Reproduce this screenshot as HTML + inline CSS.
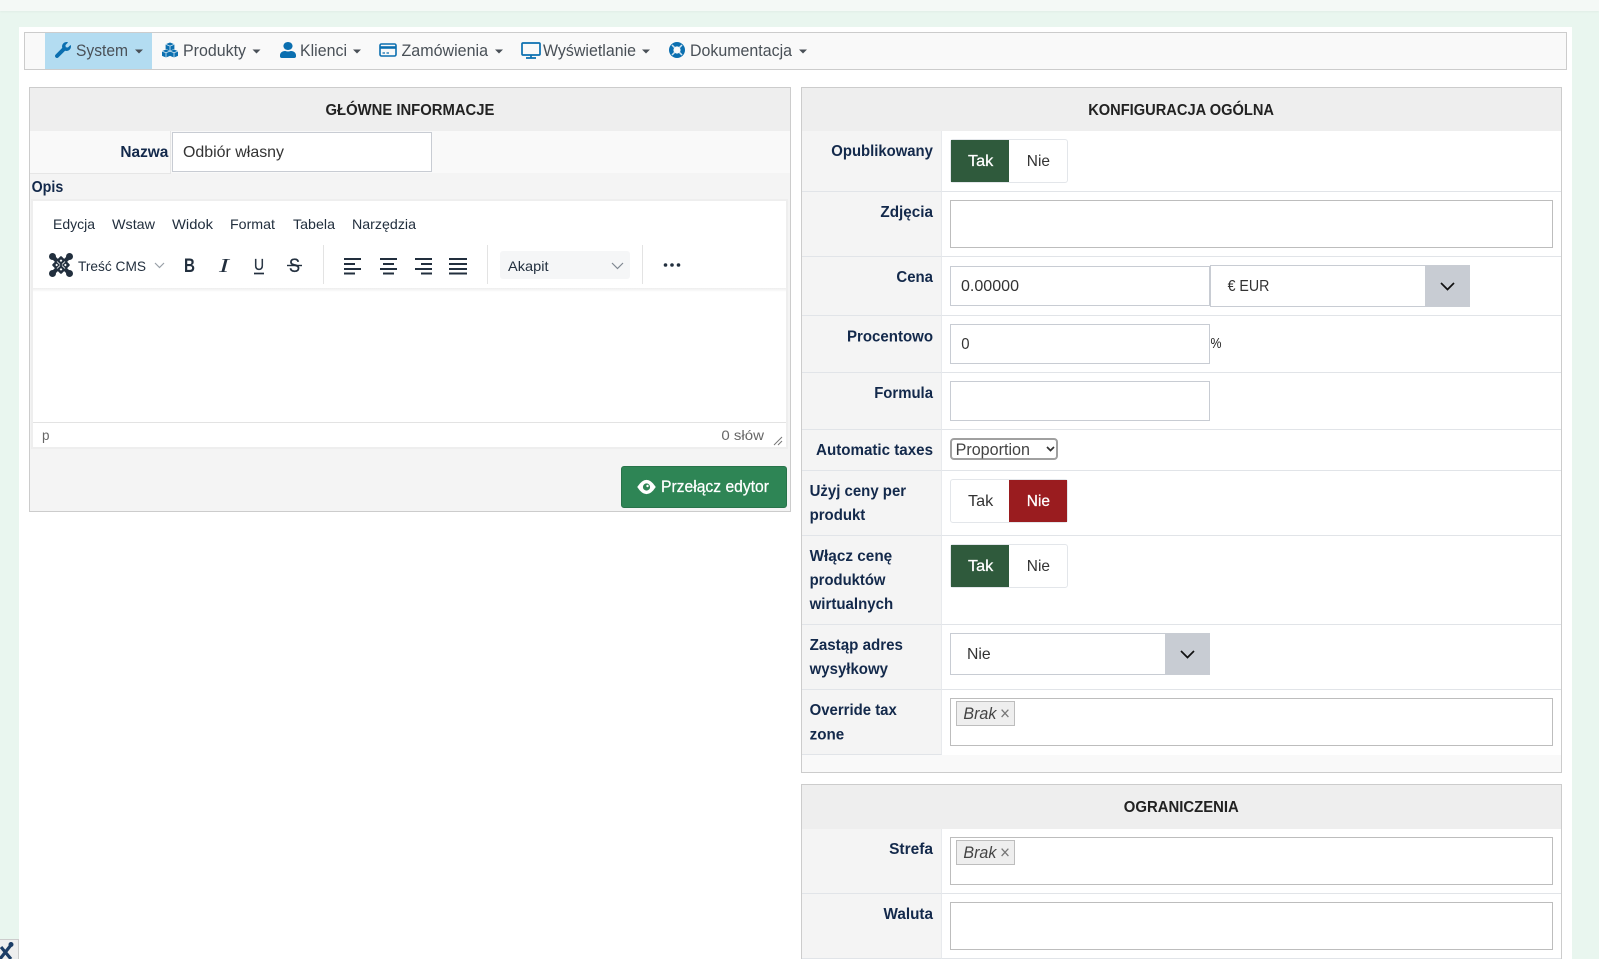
<!DOCTYPE html>
<html lang="pl"><head><meta charset="utf-8"><title>Odbiór własny</title>
<style>
html,body{margin:0;padding:0;width:1599px;height:959px;overflow:hidden;background:#e9f6ef;font-family:"Liberation Sans",sans-serif}
.b{position:absolute;box-sizing:border-box}
.in{background:#fff;border:1px solid #c8ccd3}
.bx{background:#fff;border:1px solid #bdbdbd}
.lab{background:#f4f4f4;left:802px;width:140px;border-bottom:1px solid #e1e4e8;border-right:1px solid #e8eaed}
.val{background:#fff;left:942px;width:619px;border-bottom:1px solid #e1e4e8}
.tag{background:#eee;border:1px solid #bdbdbd;left:956px;width:59px;height:25px}
.tg{left:950px;width:118px;height:44px;border:1px solid #e3e6ea;border-radius:3px;background:#fff}
.ar{background:#c8ccd3}
svg{position:absolute;left:0;top:0}
text{font-family:"Liberation Sans",sans-serif}
.l{font-size:15.5px;font-weight:700;fill:#13294b}
.h{font-size:15.5px;font-weight:700;fill:#222}
.n{font-size:16.5px;fill:#495057}
.m{font-size:14px;fill:#222f3e}
.v{font-size:16px;fill:#333}
.w{fill:#fff;stroke:#fff;stroke-width:.25px}
</style></head><body>
<div class="b" style="left:0;top:0;width:1599px;height:11px;background:#f4f9f6;box-shadow:0 1px 2px rgba(0,0,0,.04)"></div>
<div class="b" style="left:19px;top:27px;width:1553px;height:932px;background:#fff"></div>
<div class="b" style="left:24px;top:32px;width:1543px;height:38px;background:#f9f9f9;border:1px solid #ccc"></div>
<div class="b" style="left:45px;top:33px;width:107px;height:36px;background:#b3dcf1"></div>

<div class="b" style="left:29px;top:87px;width:762px;height:425px;background:#f4f4f4;border:1px solid #ccc"></div>
<div class="b" style="left:30px;top:88px;width:760px;height:43px;background:#eee"></div>
<div class="b" style="left:30px;top:131px;width:760px;height:42px;background:#f9f9f9"></div>
<div class="b" style="left:30px;top:131px;width:141px;height:43px;border-right:1px solid #e6e6e6;border-bottom:1px solid #e6e6e6"></div>
<div class="b in" style="left:172px;top:132px;width:260px;height:40px"></div>
<div class="b" style="left:31px;top:199px;width:757px;height:250px;background:#fff;border:2px solid #eee"></div>
<div class="b" style="left:33px;top:288px;width:753px;height:4px;background:linear-gradient(rgba(0,0,0,.07),rgba(0,0,0,0))"></div>
<div class="b" style="left:33px;top:422px;width:753px;height:1px;background:#e3e3e3"></div>
<div class="b" style="left:323px;top:245px;width:1px;height:39px;background:#e3e3e3"></div>
<div class="b" style="left:487px;top:245px;width:1px;height:39px;background:#e3e3e3"></div>
<div class="b" style="left:642px;top:245px;width:1px;height:39px;background:#e3e3e3"></div>
<div class="b" style="left:500px;top:251px;width:130px;height:28px;background:#f5f6f7;border-radius:3px"></div>
<div class="b" style="left:621px;top:466px;width:166px;height:42px;background:#2e8555;border:1px solid #28734a;border-radius:3px"></div>

<div class="b" style="left:801px;top:87px;width:761px;height:686px;background:#f9f9f9;border:1px solid #ccc"></div>
<div class="b" style="left:802px;top:88px;width:759px;height:43px;background:#eee"></div>
<div class="b lab" style="top:131px;height:61px"></div><div class="b val" style="top:131px;height:61px"></div>
<div class="b lab" style="top:192px;height:65px"></div><div class="b val" style="top:192px;height:65px"></div>
<div class="b lab" style="top:257px;height:59px"></div><div class="b val" style="top:257px;height:59px"></div>
<div class="b lab" style="top:316px;height:57px"></div><div class="b val" style="top:316px;height:57px"></div>
<div class="b lab" style="top:373px;height:57px"></div><div class="b val" style="top:373px;height:57px"></div>
<div class="b lab" style="top:430px;height:41px"></div><div class="b val" style="top:430px;height:41px"></div>
<div class="b lab" style="top:471px;height:65px"></div><div class="b val" style="top:471px;height:65px"></div>
<div class="b lab" style="top:536px;height:89px"></div><div class="b val" style="top:536px;height:89px"></div>
<div class="b lab" style="top:625px;height:65px"></div><div class="b val" style="top:625px;height:65px"></div>
<div class="b lab" style="top:690px;height:65px"></div><div class="b val" style="top:690px;height:65px;border-bottom:0"></div>

<div class="b tg" style="top:139px"></div><div class="b" style="left:951px;top:140px;width:58px;height:42px;background:#2f5a3c"></div>
<div class="b bx" style="left:950px;top:200px;width:603px;height:48px"></div>
<div class="b in" style="left:950px;top:266px;width:260px;height:40px"></div>
<div class="b in" style="left:1210px;top:265px;width:216px;height:42px"></div><div class="b ar" style="left:1425px;top:265px;width:45px;height:42px"></div>
<div class="b in" style="left:950px;top:324px;width:260px;height:40px"></div>
<div class="b in" style="left:950px;top:381px;width:260px;height:40px"></div>
<div class="b" style="left:950px;top:438px;width:108px;height:22px;background:#fff;border:2px solid #a0a0a0;border-radius:4px"></div>
<div class="b tg" style="top:479px"></div><div class="b" style="left:1009px;top:480px;width:58px;height:42px;background:#9a1c1f"></div>
<div class="b tg" style="top:544px"></div><div class="b" style="left:951px;top:545px;width:58px;height:42px;background:#2f5a3c"></div>
<div class="b in" style="left:950px;top:633px;width:216px;height:42px"></div><div class="b ar" style="left:1165px;top:633px;width:45px;height:42px"></div>
<div class="b bx" style="left:950px;top:698px;width:603px;height:48px"></div>
<div class="b tag" style="top:701px"></div>

<div class="b" style="left:801px;top:784px;width:761px;height:175px;background:#f9f9f9;border:1px solid #ccc;border-bottom:0"></div>
<div class="b" style="left:802px;top:785px;width:759px;height:44px;background:#eee"></div>
<div class="b lab" style="top:829px;height:65px"></div><div class="b val" style="top:829px;height:65px"></div>
<div class="b lab" style="top:894px;height:65px"></div><div class="b val" style="top:894px;height:65px"></div>
<div class="b bx" style="left:950px;top:837px;width:603px;height:48px"></div>
<div class="b tag" style="top:840px"></div>
<div class="b bx" style="left:950px;top:902px;width:603px;height:48px"></div>
<div class="b" style="left:0;top:939px;width:19px;height:20px;background:#eee;border-top:1px solid #ccc;border-right:1px solid #ccc"></div>

<svg width="1599" height="959" viewBox="0 0 1599 959" xmlns="http://www.w3.org/2000/svg">
<!-- nav icons -->
<g fill="#0b6fb0">
<path transform="translate(55 42) scale(.03125)" d="M507.73 109.1c-2.24-9.03-13.54-12.09-20.12-5.51l-74.36 74.36-67.88-11.31-11.31-67.88 74.36-74.36c6.62-6.62 3.43-17.9-5.66-20.16-47.38-11.74-99.55.91-136.58 37.93-39.64 39.64-50.55 97.1-34.05 147.2L18.74 402.76c-24.99 24.99-24.99 65.51 0 90.5 24.99 24.99 65.51 24.99 90.5 0l213.21-213.21c50.12 16.71 107.47 5.68 147.37-34.22 37.07-37.07 49.7-89.32 37.91-136.73z"/>
<path d="M170 42.500l4.400 1.800v4.600l-4.400 1.800-4.400-1.800v-4.600z"/>
<path d="M166 49.500l4 1.600v4.800l-4 1.600-4-1.600v-4.800z"/>
<path d="M174 49.500l4 1.600v4.800l-4 1.600-4-1.600v-4.800z"/>
<path transform="translate(280 42) scale(.03571 .03125)" d="M224 256c70.7 0 128-57.3 128-128S294.7 0 224 0 96 57.3 96 128s57.3 128 128 128zm89.6 32h-16.7c-22.2 10.2-46.9 16-72.9 16s-50.6-5.8-72.9-16h-16.7C60.2 288 0 348.2 0 422.4V464c0 26.5 21.5 48 48 48h352c26.5 0 48-21.5 48-48v-41.6c0-74.2-60.2-134.4-134.4-134.4z"/>
</g>
<path d="M165.600 44.300l4.400 1.800 4.400-1.800M162 51.100l4 1.600 4-1.600M170 51.100l4 1.600 4-1.600M166 52.700v5M174 52.700v5M170 46.100v4.600" fill="none" stroke="#d5e8f4" stroke-width=".8"/>
<g fill="none" stroke="#0b6fb0">
<rect x="380" y="44" width="16" height="12" rx="1.5" stroke-width="1.6"/>
<path d="M380 47.500h16" stroke-width="2.600"/>
<path d="M382.500 53h2.500M386.500 53h2.500" stroke-width="1.300"/>
<rect x="522" y="43" width="18" height="12" rx="1" stroke-width="1.700"/>
<path d="M531 55v2.500M526 58h10" stroke-width="1.700"/>
</g>
<circle cx="677" cy="50" r="8" fill="#0b6fb0"/><circle cx="677" cy="50" r="3.600" fill="#f9f9f9"/>
<path d="M672 45l2.800 2.800M682 45l-2.800 2.800M672 55l2.800-2.800M682 55l-2.800-2.800" stroke="#cfe4f2" stroke-width="1.500"/>
<!-- nav text -->
<text class="n" x="76" y="56" textLength="52" lengthAdjust="spacingAndGlyphs">System</text>
<text class="n" x="183" y="56" textLength="63" lengthAdjust="spacingAndGlyphs">Produkty</text>
<text class="n" x="300" y="56" textLength="47" lengthAdjust="spacingAndGlyphs">Klienci</text>
<text class="n" x="401.500" y="56" textLength="86.500" lengthAdjust="spacingAndGlyphs">Zamówienia</text>
<text class="n" x="543" y="56" textLength="93" lengthAdjust="spacingAndGlyphs">Wyświetlanie</text>
<text class="n" x="690" y="56" textLength="102" lengthAdjust="spacingAndGlyphs">Dokumentacja</text>
<g fill="#495057">
<path d="M135 49.500h8l-4 4z"/><path d="M252.500 49.500h8l-4 4z"/><path d="M353 49.500h8l-4 4z"/><path d="M495 49.500h8l-4 4z"/><path d="M642 49.500h8l-4 4z"/><path d="M799 49.500h8l-4 4z"/>
</g>
<!-- headers -->
<text class="h" x="325.500" y="115" textLength="168.900" lengthAdjust="spacingAndGlyphs">GŁÓWNE INFORMACJE</text>
<text class="h" x="1088.200" y="115" textLength="185.800" lengthAdjust="spacingAndGlyphs">KONFIGURACJA OGÓLNA</text>
<text class="h" x="1123.800" y="812" textLength="115" lengthAdjust="spacingAndGlyphs">OGRANICZENIA</text>
<!-- left form -->
<text class="l" x="120.400" y="157" textLength="48" lengthAdjust="spacingAndGlyphs">Nazwa</text>
<text class="v" x="183" y="157" textLength="101" lengthAdjust="spacingAndGlyphs">Odbiór własny</text>
<text class="l" x="31.600" y="192" textLength="31.700" lengthAdjust="spacingAndGlyphs">Opis</text>
<text class="m" x="53" y="229" textLength="42" lengthAdjust="spacingAndGlyphs">Edycja</text>
<text class="m" x="112" y="229" textLength="43" lengthAdjust="spacingAndGlyphs">Wstaw</text>
<text class="m" x="172" y="229" textLength="41" lengthAdjust="spacingAndGlyphs">Widok</text>
<text class="m" x="230" y="229" textLength="45" lengthAdjust="spacingAndGlyphs">Format</text>
<text class="m" x="293" y="229" textLength="42" lengthAdjust="spacingAndGlyphs">Tabela</text>
<text class="m" x="352" y="229" textLength="64" lengthAdjust="spacingAndGlyphs">Narzędzia</text>
<!-- joomla icon -->
<g fill="none" stroke="#222f3e" stroke-linecap="round">
<path d="M53.500 257.500L68.500 272.500M68.500 257.500L53.500 272.500" stroke-width="4.200"/>
<path d="M61 257.500L68.500 265L61 272.500L53.500 265Z" stroke-width="2.600" stroke-linejoin="round"/>
</g>
<path d="M57 261.500l3 3M65 261.500l-3 3M57 268.500l3-3M65 268.500l-3-3" stroke="#fff" stroke-width=".8"/>
<g fill="#222f3e"><circle cx="52.500" cy="256.500" r="3.500"/><circle cx="69.500" cy="256.500" r="3.500"/><circle cx="52.500" cy="273.500" r="3.500"/><circle cx="69.500" cy="273.500" r="3.500"/></g>
<text class="m" x="78" y="271" textLength="68" lengthAdjust="spacingAndGlyphs">Treść CMS</text>
<path d="M155 263l4.500 4.500 4.500-4.500" fill="none" stroke="#99a0a8" stroke-width="1.200"/>
<text x="184" y="272" font-size="19.500" font-weight="700" fill="#222f3e" textLength="11" lengthAdjust="spacingAndGlyphs">B</text>
<text x="219" y="272" font-size="20" font-style="italic" fill="#222f3e" style="font-family:'Liberation Serif',serif" textLength="10" lengthAdjust="spacingAndGlyphs">I</text>
<text x="254" y="270" font-size="16" fill="#222f3e" stroke="#222f3e" stroke-width=".3" textLength="10" lengthAdjust="spacingAndGlyphs">U</text>
<path d="M254 273.500h10" stroke="#222f3e" stroke-width="1.700"/>
<text x="289" y="272" font-size="19" fill="#222f3e" stroke="#222f3e" stroke-width=".3" textLength="11" lengthAdjust="spacingAndGlyphs">S</text>
<path d="M287 265.500h15" stroke="#222f3e" stroke-width="1.400"/>
<g stroke="#222f3e" stroke-width="2" fill="none">
<path d="M344 259h17M344 264h11M344 269h17M344 273.500h11"/>
<path d="M380 259h17M383 264h11M380 269h17M383 273.500h11"/>
<path d="M415 259h17M421 264h11M415 269h17M421 273.500h11"/>
<path d="M449 259h18M449 264h18M449 269h18M449 273.500h18"/>
</g>
<text class="m" x="508" y="271" textLength="40.500" lengthAdjust="spacingAndGlyphs">Akapit</text>
<path d="M612 263l5.500 5.500 5.500-5.500" fill="none" stroke="#7f8791" stroke-width="1.200"/>
<g fill="#222f3e"><circle cx="665.500" cy="265" r="1.800"/><circle cx="672" cy="265" r="1.800"/><circle cx="678.500" cy="265" r="1.800"/></g>
<text x="42" y="440" font-size="14" fill="#666" textLength="7.500" lengthAdjust="spacingAndGlyphs">p</text>
<text x="721.400" y="440" font-size="14" fill="#666" textLength="42.600" lengthAdjust="spacingAndGlyphs">0 słów</text>
<path d="M774 445l8-8M778 445l4-4" stroke="#777" stroke-width="1"/>
<path d="M638 487q8.500-13 17 0q-8.500 13-17 0z" fill="#fff" stroke="#fff" stroke-width="1.200"/><circle cx="646.500" cy="487" r="3.600" fill="#2e8555"/><circle cx="647.500" cy="486" r="1.200" fill="#fff"/>
<text x="661" y="492" font-size="16.500" fill="#fff" stroke="#fff" stroke-width=".25" textLength="108" lengthAdjust="spacingAndGlyphs">Przełącz edytor</text>
<!-- labels -->
<text class="l" x="831.300" y="156" textLength="101.600" lengthAdjust="spacingAndGlyphs">Opublikowany</text>
<text class="l" x="880.400" y="217" textLength="52.600" lengthAdjust="spacingAndGlyphs">Zdjęcia</text>
<text class="l" x="896.400" y="282" textLength="36.600" lengthAdjust="spacingAndGlyphs">Cena</text>
<text class="l" x="847" y="341.500" textLength="86" lengthAdjust="spacingAndGlyphs">Procentowo</text>
<text class="l" x="874.200" y="398" textLength="58.800" lengthAdjust="spacingAndGlyphs">Formula</text>
<text class="l" x="816" y="455" textLength="117" lengthAdjust="spacingAndGlyphs">Automatic taxes</text>
<text class="l" x="809.600" y="496" textLength="96.500" lengthAdjust="spacingAndGlyphs">Użyj ceny per</text>
<text class="l" x="809.600" y="520" textLength="55.700" lengthAdjust="spacingAndGlyphs">produkt</text>
<text class="l" x="809.600" y="561" textLength="82.600" lengthAdjust="spacingAndGlyphs">Włącz cenę</text>
<text class="l" x="809.600" y="585" textLength="75.900" lengthAdjust="spacingAndGlyphs">produktów</text>
<text class="l" x="809.600" y="609" textLength="83.600" lengthAdjust="spacingAndGlyphs">wirtualnych</text>
<text class="l" x="809.600" y="650" textLength="93.400" lengthAdjust="spacingAndGlyphs">Zastąp adres</text>
<text class="l" x="809.600" y="674" textLength="78.400" lengthAdjust="spacingAndGlyphs">wysyłkowy</text>
<text class="l" x="809.600" y="715" textLength="87.200" lengthAdjust="spacingAndGlyphs">Override tax</text>
<text class="l" x="809.600" y="739.500" textLength="34.600" lengthAdjust="spacingAndGlyphs">zone</text>
<text class="l" x="889.100" y="854" textLength="43.900" lengthAdjust="spacingAndGlyphs">Strefa</text>
<text class="l" x="883.500" y="919" textLength="49.500" lengthAdjust="spacingAndGlyphs">Waluta</text>
<!-- values -->
<text class="v w" x="968" y="166" textLength="25.300" lengthAdjust="spacingAndGlyphs">Tak</text>
<text class="v" x="1026.800" y="166" textLength="23.200" lengthAdjust="spacingAndGlyphs">Nie</text>
<text class="v" x="961" y="291" textLength="58" lengthAdjust="spacingAndGlyphs">0.00000</text>
<text class="v" x="1227.600" y="291" textLength="41.800" lengthAdjust="spacingAndGlyphs">€ EUR</text>
<path d="M1441 283l6.500 6.500 6.500-6.500" fill="none" stroke="#111" stroke-width="1.700"/>
<text class="v" x="961.300" y="349" textLength="8.300" lengthAdjust="spacingAndGlyphs">0</text>
<text x="1210.500" y="348" font-size="14.500" fill="#222" textLength="11" lengthAdjust="spacingAndGlyphs">%</text>
<text x="955.600" y="455" font-size="16.500" fill="#444" textLength="74.400" lengthAdjust="spacingAndGlyphs">Proportion</text>
<path d="M1047 447l3.500 3.500 3.500-3.500" fill="none" stroke="#333" stroke-width="1.700"/>
<text class="v" x="968" y="506" textLength="25.300" lengthAdjust="spacingAndGlyphs">Tak</text>
<text class="v w" x="1026.800" y="506" textLength="23.200" lengthAdjust="spacingAndGlyphs">Nie</text>
<text class="v w" x="968" y="571" textLength="25.300" lengthAdjust="spacingAndGlyphs">Tak</text>
<text class="v" x="1026.800" y="571" textLength="23.200" lengthAdjust="spacingAndGlyphs">Nie</text>
<text class="v" x="967" y="659" textLength="23.700" lengthAdjust="spacingAndGlyphs">Nie</text>
<path d="M1181 651l6.500 6.500 6.500-6.500" fill="none" stroke="#111" stroke-width="1.700"/>
<text x="963.400" y="719" font-size="17" font-style="italic" fill="#444" textLength="33" lengthAdjust="spacingAndGlyphs">Brak</text>
<text x="1000" y="719.500" font-size="18" fill="#777" textLength="10" lengthAdjust="spacingAndGlyphs">×</text>
<text x="963.400" y="858" font-size="17" font-style="italic" fill="#444" textLength="33" lengthAdjust="spacingAndGlyphs">Brak</text>
<text x="1000" y="858.500" font-size="18" fill="#777" textLength="10" lengthAdjust="spacingAndGlyphs">×</text>
<!-- bottom-left icon -->
<g fill="none" stroke="#1c3d66" stroke-width="3.200"><path d="M1 947L11 959M11 945L0 959"/></g><circle cx="11" cy="944.500" r="2.500" fill="#1c3d66"/>
</svg>
</body></html>
